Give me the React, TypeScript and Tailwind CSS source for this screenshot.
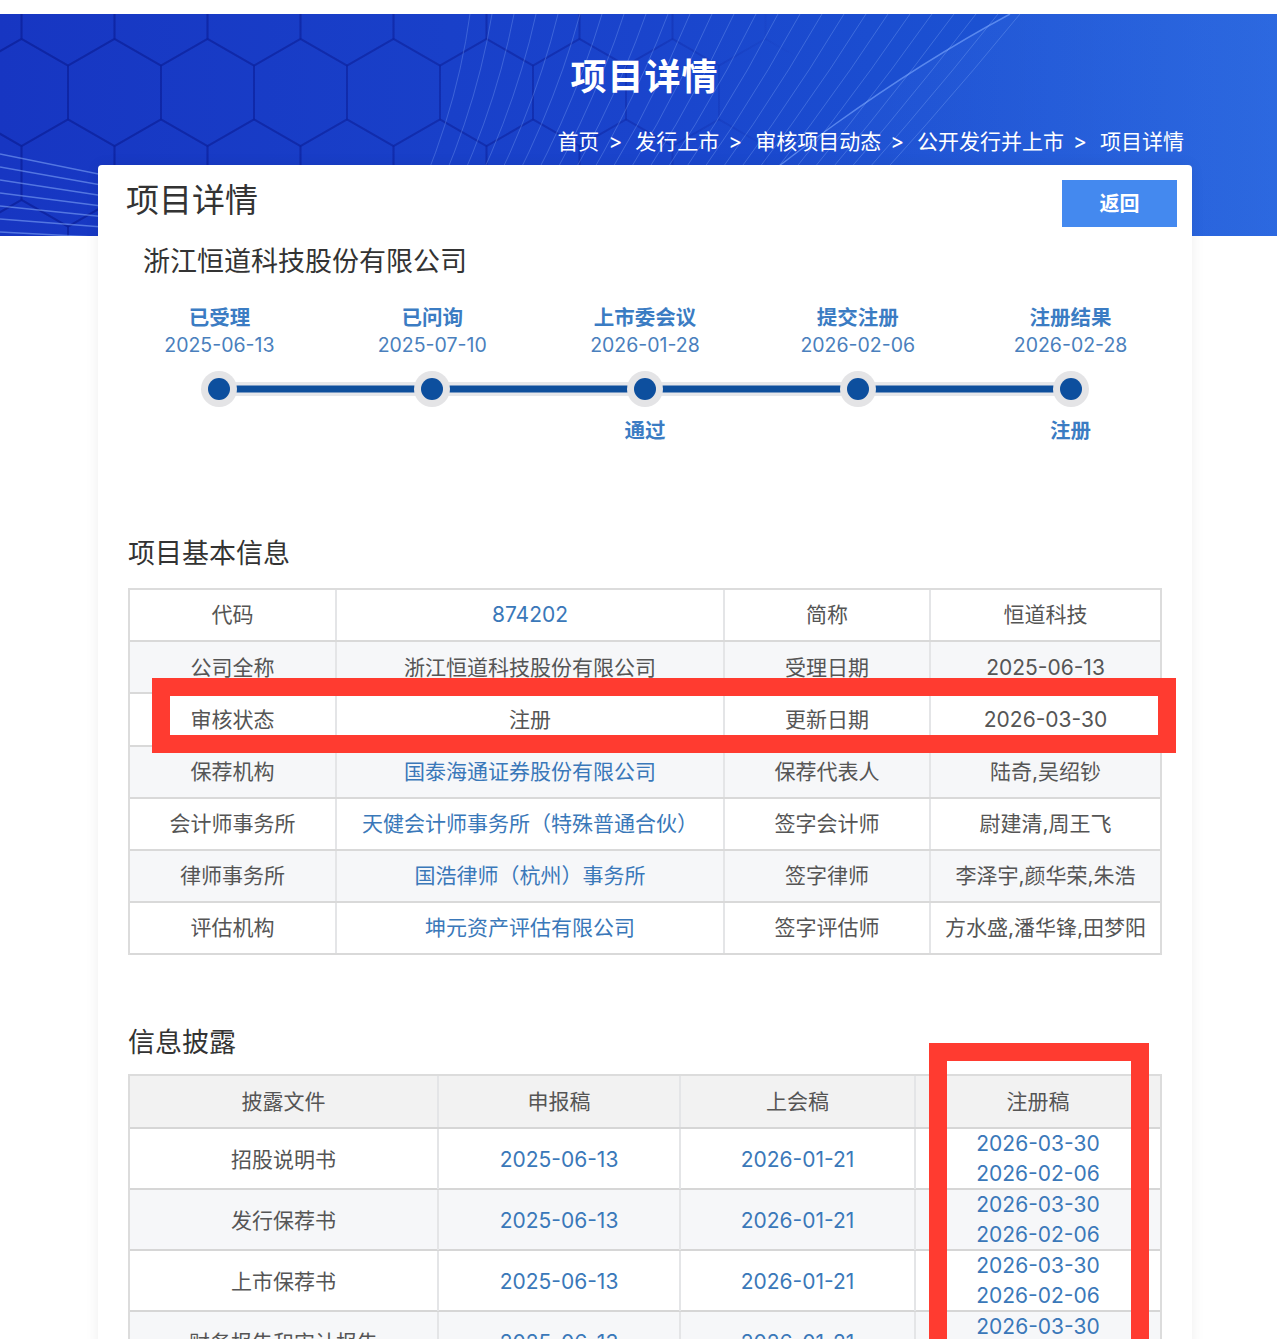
import type { ReactNode } from "react";

const font = "font-['Inter','Noto_Sans_CJK_SC',sans-serif]";

type Cell = { t: string; link?: boolean };

const steps = [
    { label: "已受理", date: "2025-06-13", note: "" },
    { label: "已问询", date: "2025-07-10", note: "" },
    { label: "上市委会议", date: "2026-01-28", note: "通过" },
    { label: "提交注册", date: "2026-02-06", note: "" },
    { label: "注册结果", date: "2026-02-28", note: "注册" },
];

const basicRows: Cell[][] = [
    [{ t: "代码" }, { t: "874202", link: true }, { t: "简称" }, { t: "恒道科技" }],
    [{ t: "公司全称" }, { t: "浙江恒道科技股份有限公司" }, { t: "受理日期" }, { t: "2025-06-13" }],
    [{ t: "审核状态" }, { t: "注册" }, { t: "更新日期" }, { t: "2026-03-30" }],
    [{ t: "保荐机构" }, { t: "国泰海通证券股份有限公司", link: true }, { t: "保荐代表人" }, { t: "陆奇,吴绍钞" }],
    [{ t: "会计师事务所" }, { t: "天健会计师事务所（特殊普通合伙）", link: true }, { t: "签字会计师" }, { t: "尉建清,周王飞" }],
    [{ t: "律师事务所" }, { t: "国浩律师（杭州）事务所", link: true }, { t: "签字律师" }, { t: "李泽宇,颜华荣,朱浩" }],
    [{ t: "评估机构" }, { t: "坤元资产评估有限公司", link: true }, { t: "签字评估师" }, { t: "方水盛,潘华锋,田梦阳" }],
];

const docs = ["招股说明书", "发行保荐书", "上市保荐书", "财务报告和审计报告"];

const crumbs = ["首页", "发行上市", "审核项目动态", "公开发行并上市", "项目详情"];

// pointy-top hexagon outline around a centre point
const hexPath = (cx: number, cy: number, r: number) => {
    const pts = [0, 1, 2, 3, 4, 5].map((i) => {
        const a = (Math.PI / 180) * (60 * i - 90);
        return `${(cx + r * Math.cos(a)).toFixed(1)},${(cy + r * Math.sin(a)).toFixed(1)}`;
    });
    return `M${pts.join("L")}Z`;
};

const BannerArt = () => {
    const hexes: string[] = [];
    const w = 93;
    const r = 53.7;
    for (let row = 0; row < 4; row++) {
        const cy = -2 + row * 80.5;
        const off = row % 2 === 0 ? 0 : w / 2;
        for (let col = -1; col < 10; col++) {
            hexes.push(hexPath(68 + col * w + off, cy, r));
        }
    }
    return (
        <svg className="absolute inset-0 h-full w-full" viewBox="0 0 1277 222" preserveAspectRatio="none">
            <defs>
                <linearGradient id="hexfade" x1="0" y1="0" x2="800" y2="0" gradientUnits="userSpaceOnUse">
                    <stop offset="0" stopColor="#0b1f9a" stopOpacity="0.5" />
                    <stop offset="0.7" stopColor="#0b1f9a" stopOpacity="0.3" />
                    <stop offset="1" stopColor="#0b1f9a" stopOpacity="0" />
                </linearGradient>
                <linearGradient id="glow" x1="0" y1="0" x2="1" y2="0">
                    <stop offset="0" stopColor="#5f95ff" stopOpacity="0" />
                    <stop offset="1" stopColor="#5f95ff" stopOpacity="0.22" />
                </linearGradient>
            </defs>
            {hexes.map((d, i) => (
                <path key={i} d={d} fill="none" stroke="url(#hexfade)" strokeWidth="2" />
            ))}
            {/* wave surface */}
            <path d="M690 222 C 780 150, 880 70, 1010 0 L 1277 0 L 1277 222 Z" fill="url(#glow)" />
            <path d="M690 222 C 780 150, 880 70, 1010 0" fill="none" stroke="#7eaaff" strokeOpacity="0.6" strokeWidth="1.5" />
            {Array.from({ length: 26 }).map((_, i) => (
                <path
                    key={"f" + i}
                    d={`M${470 + i * 22} 0 Q ${455 + i * 19} 110 ${400 + i * 17} 222`}
                    fill="none"
                    stroke="#9cc0ff"
                    strokeOpacity={0.28}
                    strokeWidth="1"
                />
            ))}
            {Array.from({ length: 8 }).map((_, i) => (
                <path
                    key={"l" + i}
                    d={`M0 ${140 + i * 13} L 320 ${205 + i * 5}`}
                    fill="none"
                    stroke="#8fb6ff"
                    strokeOpacity={0.5}
                    strokeWidth="1.5"
                />
            ))}
        </svg>
    );
};

const Td = ({ children, className = "" }: { children: ReactNode; className?: string }) => (
    <div className={`flex items-center justify-center border-l-2 border-[#e4e5e7] first:border-l-0 text-center ${className}`}>
        {children}
    </div>
);

const App = () => {
    return (
        <div className={`relative h-[1339px] w-full overflow-hidden bg-white pt-[14px] ${font}`}>
            <header className="relative h-[222px] overflow-hidden bg-linear-to-r from-[#1736c2] via-[#1a44cc] to-[#1e5cd7]">
                <BannerArt />
                <div className="relative flex flex-col">
                    <h1 className="mt-[43px] pl-[12px] text-center text-[36px] leading-[40px] font-bold tracking-[1px] text-white">项目详情</h1>
                    <nav className="mt-[31px] flex justify-end pr-[93px] text-[21px] leading-[28px] text-white">
                        {crumbs.map((c, i) => (
                            <span key={c} className="flex">
                                {i > 0 && <span className="ml-[9px] mr-[13px]">&gt;</span>}
                                {c}
                            </span>
                        ))}
                    </nav>
                </div>
            </header>

            <main className="relative z-10 mx-[98px] -mt-[71px] w-[1094px] rounded-t-[4px] bg-white pb-10 shadow-[0_0_14px_rgba(0,0,0,0.07)]">
                <div className="flex items-start justify-between pt-[15px] pr-[15px] pl-[28px]">
                    <h2 className="text-[33px] leading-[40px] text-[#333]">项目详情</h2>
                    <button className="h-[47px] w-[115px] bg-[#4489ef] text-[20px] font-semibold text-white">返回</button>
                </div>
                <div className="mt-[17px] pl-[45px] text-[27px] leading-[36px] text-[#333]">浙江恒道科技股份有限公司</div>

                {/* progress */}
                <div className="mt-[24px] px-[15px]">
                    <div className="grid grid-cols-5 text-center">
                        {steps.map((s) => (
                            <div key={s.label} className="flex flex-col items-center">
                                <div className="text-[20.5px] leading-[28px] font-bold text-[#3b7cc3]">{s.label}</div>
                                <div className="text-[19.5px] leading-[26px] text-[#4a7fbd]">{s.date}</div>
                            </div>
                        ))}
                    </div>
                    <div className="relative mt-[13px] grid h-[36px] grid-cols-5">
                        <div className="absolute top-1/2 right-[10%] left-[10%] h-[14px] -translate-y-1/2 bg-[#e6e7ea]" />
                        <div className="absolute top-1/2 right-[10%] left-[10%] h-[7px] -translate-y-1/2 bg-[#0e4f9c]" />
                        {steps.map((s) => (
                            <div key={s.label} className="relative flex justify-center">
                                <div className="flex h-[36px] w-[36px] items-center justify-center rounded-full bg-[#e4e4e6]">
                                    <div className="h-[22px] w-[22px] rounded-full bg-[#0d4f9e]" />
                                </div>
                            </div>
                        ))}
                    </div>
                    <div className="mt-[10px] grid grid-cols-5 text-center">
                        {steps.map((s) => (
                            <div key={s.label} className="h-[28px] text-[20.5px] leading-[28px] font-bold text-[#3b7cc3]">{s.note}</div>
                        ))}
                    </div>
                </div>

                <section className="px-[30px]">
                    <h3 className="mt-[91px] text-[27px] leading-[36px] text-[#333]">项目基本信息</h3>
                    <div className="mt-[16px] border-x-2 border-t-2 border-[#dcdcdc] text-[21px] text-[#555]">
                        {basicRows.map((row, i) => (
                            <div
                                key={i}
                                className={`grid h-[52.2px] grid-cols-[205px_388px_206px_231px] border-b-2 border-[#d9d9d9] ${i % 2 === 1 ? "bg-[#f6f7f9]" : "bg-white"}`}
                            >
                                {row.map((c, j) => (
                                    <Td key={j} className={c.link ? "text-[#3a78b9]" : ""}>{c.t}</Td>
                                ))}
                            </div>
                        ))}
                    </div>

                    <h3 className="mt-[70px] text-[27px] leading-[36px] text-[#333]">信息披露</h3>
                    <div className="mt-[13px] border-x-2 border-t-2 border-[#dcdcdc] text-[21px] text-[#555]">
                        <div className="grid h-[53px] grid-cols-[307px_242px_235px_246px] border-b-2 border-[#d6d6d6] bg-[#f2f2f2]">
                            <Td>披露文件</Td>
                            <Td>申报稿</Td>
                            <Td>上会稿</Td>
                            <Td>注册稿</Td>
                        </div>
                        {docs.map((d, i) => (
                            <div
                                key={d}
                                className={`grid h-[61px] grid-cols-[307px_242px_235px_246px] border-b-2 border-[#d6d6d6] ${i % 2 === 1 ? "bg-[#f6f7f9]" : "bg-white"}`}
                            >
                                <Td>{d}</Td>
                                <Td className="text-[#3a78b9]">2025-06-13</Td>
                                <Td className="text-[#3a78b9]">2026-01-21</Td>
                                <Td className="flex-col leading-[30px] text-[#3a78b9]">
                                    <span>2026-03-30</span>
                                    <span>2026-02-06</span>
                                </Td>
                            </div>
                        ))}
                    </div>
                </section>
            </main>

            {/* highlight frames */}
            <div className="absolute top-[678px] left-[152px] z-20 h-[75px] w-[1024px] border-[18px] border-[#ff3b30]" />
            <div className="absolute top-[1043px] left-[929px] z-20 h-[400px] w-[220px] border-[18px] border-[#ff3b30]" />
        </div>
    );
};

export default App;
